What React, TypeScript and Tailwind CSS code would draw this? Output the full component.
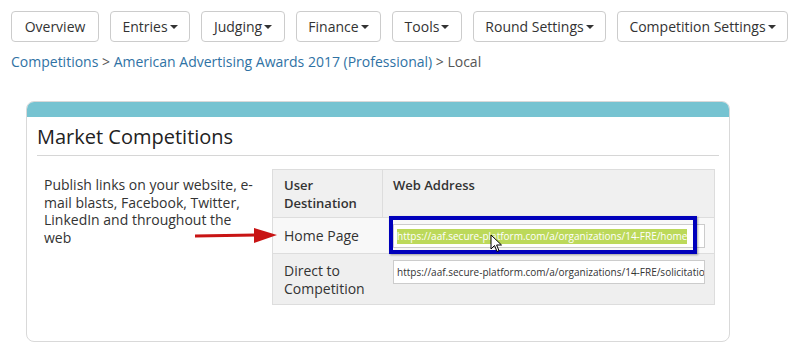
import React from 'react';

const font = { fontFamily: '"Open Sans", "Liberation Sans", sans-serif' };

function NavButton({ label, width, caret = true }: { label: string; width: string; caret?: boolean }) {
  return (
    <div
      className={`${width} h-[31px] flex items-center justify-center rounded-[4px] border border-[#cccccc] bg-white text-[14px] text-[#333333]`}
    >
      <span>{label}</span>
      {caret && (
        <span className="ml-[2px] mt-[1px] w-0 h-0 border-l-[4px] border-r-[4px] border-t-[4px] border-l-transparent border-r-transparent border-t-[#333333]" />
      )}
    </div>
  );
}

export default function App() {
  return (
    <div className="relative w-[793px] h-[355px] bg-white overflow-hidden" style={font}>
      <div className="flex gap-[11px] pl-[11px] pt-[11px]">
        <NavButton label="Overview" width="w-[88px]" caret={false} />
        <NavButton label="Entries" width="w-[80px]" />
        <NavButton label="Judging" width="w-[84px]" />
        <NavButton label="Finance" width="w-[85px]" />
        <NavButton label="Tools" width="w-[70px]" />
        <NavButton label="Round Settings" width="w-[133px]" />
        <NavButton label="Competition Settings" width="w-[171px]" />
      </div>

      <div className="pl-[11px] mt-[10px] h-[20px] leading-[20px] text-[14px]">
        <span className="text-[#2f72a4]">Competitions</span>
        <span className="text-[#555555]"> &gt; </span>
        <span className="text-[#2f72a4]">American Advertising Awards 2017 (Professional)</span>
        <span className="text-[#555555]"> &gt; Local</span>
      </div>

      <div className="ml-[26px] mt-[29px] w-[704px] h-[241px] rounded-[8px] border border-[#d9d9d9] overflow-hidden">
        <div className="h-[15px] bg-[#76c3d1]" />
        <div className="px-[10px]">
          <div className="h-[39px] border-b border-[#d6d6d6] flex items-end pb-[4px]">
            <span className="text-[20px] leading-[28px] text-[#222222]">Market Competitions</span>
          </div>
          <div className="flex mt-[13px]">
            <div className="w-[235px] shrink-0 pl-[7px] pt-[7px] whitespace-nowrap text-[14px] leading-[17.5px] text-[#333333]">
              Publish links on your website, e-
              <br />
              mail blasts, Facebook, Twitter,
              <br />
              LinkedIn and throughout the
              <br />
              web
            </div>
            <div className="grid grid-cols-[110px_331px] border border-[#dddddd] text-[#333333]">
              <div className="h-[47px] bg-[#f0f0f0] border-r border-[#dddddd] px-[11px] pt-[7px] text-[13px] leading-[17.5px] font-semibold">
                User
                <br />
                Destination
              </div>
              <div className="h-[47px] bg-[#f0f0f0] px-[10px] pt-[7px] text-[13px] leading-[17.5px] font-semibold">Web Address</div>

              <div className="h-[36px] bg-[#f8f8f8] border-t border-[#dddddd] px-[11px] flex items-center text-[14px]">Home Page</div>
              <div className="h-[36px] bg-[#f8f8f8] border-t border-[#dddddd] pl-[10px] pr-[9px] pt-[6px]">
                <div className="h-[24px] border border-[#cccccc] bg-white flex items-center pl-[3px] overflow-hidden whitespace-nowrap text-[10px]">
                  <span className="bg-[#bcd95a] text-white leading-[15px]">https://aaf.secure-platform.com/a/organizations/14-FRE/home</span>
                </div>
              </div>

              <div className="h-[51px] bg-[#efefef] border-t border-[#dddddd] px-[11px] pt-[8px] text-[14px] leading-[18px]">
                Direct to
                <br />
                Competition
              </div>
              <div className="h-[51px] bg-[#efefef] border-t border-[#dddddd] pl-[10px] pr-[9px] pt-[6px]">
                <div className="h-[24px] border border-[#cccccc] bg-white flex items-center pl-[3px] overflow-hidden whitespace-nowrap text-[10px]">
                  https://aaf.secure-platform.com/a/organizations/14-FRE/solicitations
                </div>
              </div>
            </div>
          </div>
        </div>
      </div>

      {/* annotation: blue highlight box */}
      <div className="absolute left-[389px] top-[216px] w-[308px] h-[38px] border-[4px] border-[#0000bb] shadow-[1px_1px_2px_rgba(0,0,0,0.35)]" />

      {/* annotation: red arrow */}
      <svg className="absolute left-[190px] top-[224px]" width="92" height="24" viewBox="0 0 92 24">
        <line x1="5" y1="12" x2="68" y2="11" stroke="#c81414" strokeWidth="3" />
        <polygon points="64,4 87,11 64,19" fill="#c81414" />
      </svg>

      {/* mouse cursor */}
      <svg className="absolute left-[490px] top-[234px]" width="14" height="20" viewBox="0 0 14 20">
        <path d="M1 1 L1 15 L4.5 11.5 L7 17.5 L9 16.6 L6.6 11 L11.5 11 Z" fill="white" stroke="black" strokeWidth="1" strokeLinejoin="round" />
      </svg>
    </div>
  );
}
